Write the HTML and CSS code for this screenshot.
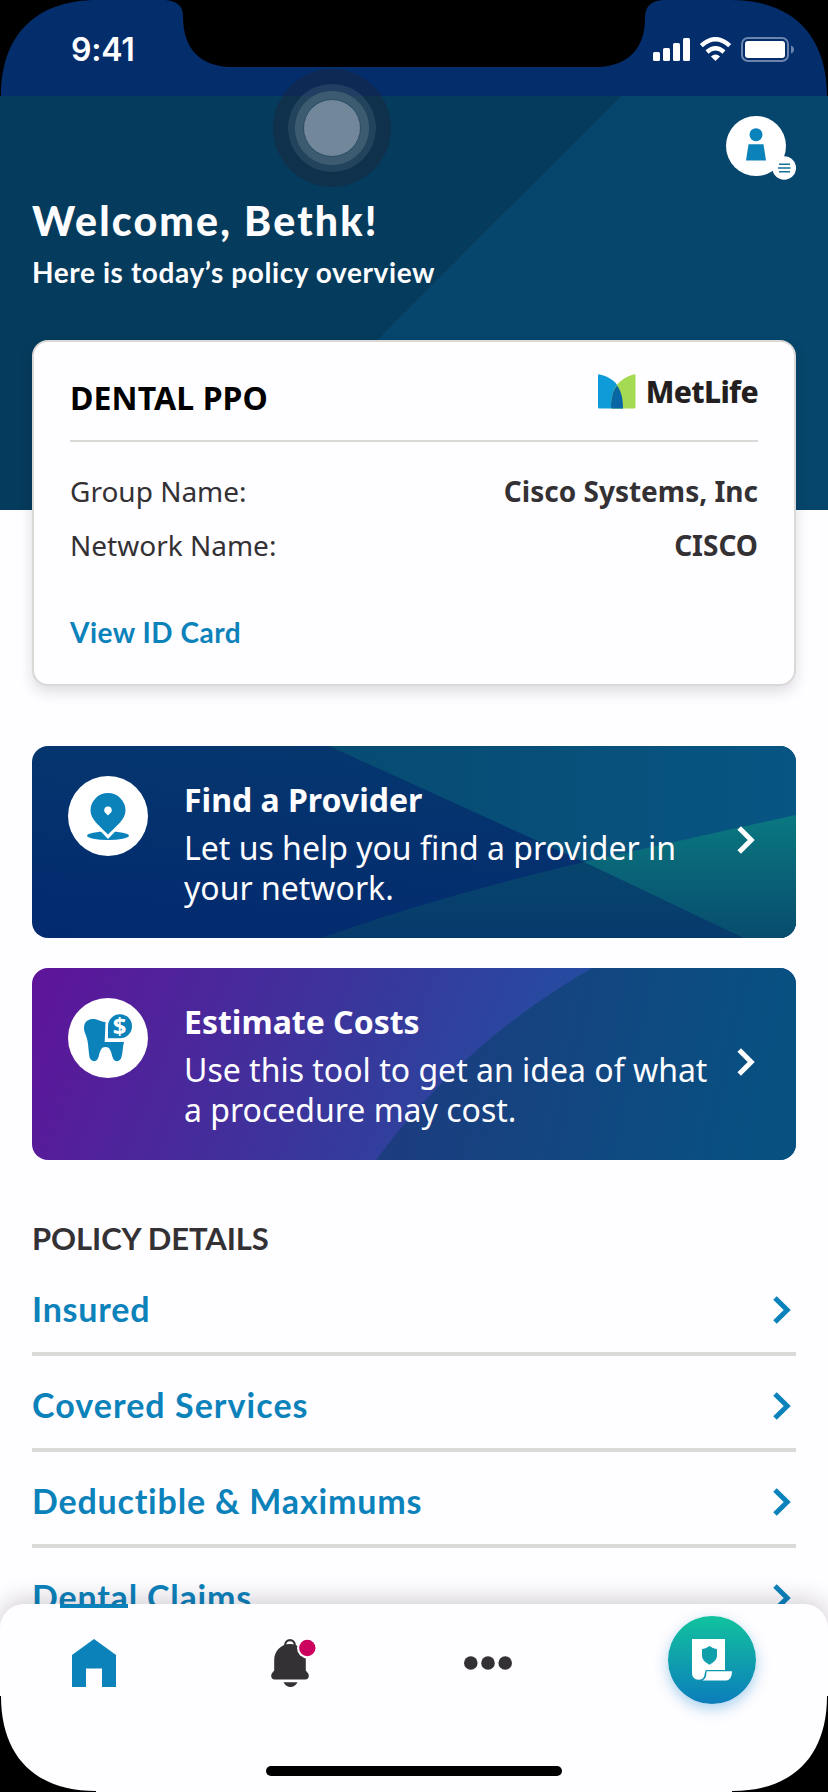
FILE: index.html
```html
<!DOCTYPE html>
<html lang="en">
<head>
<meta charset="utf-8">
<title>Policy overview</title>
<link rel="stylesheet" href="styles.css">
</head>
<body>
<div class="screen">
  <header class="status">
    <span class="time">9:41</span>
    <svg class="status-icons" width="142" height="26" viewBox="0 0 142 26">
      <g fill="#fff">
        <rect x="0" y="15" width="7" height="9" rx="1.5"/>
        <rect x="10" y="11" width="7" height="13" rx="1.5"/>
        <rect x="20" y="6" width="7" height="18" rx="1.5"/>
        <rect x="30" y="1" width="7" height="23" rx="1.5"/>
        <path d="M62.5 24l-4.600-4.600q4.600-3.600 9.200 0z"/>
      </g>
      <g fill="none" stroke="#fff" stroke-width="4.400">
        <path d="M48.300 8.700Q62.500-4.300 76.700 8.700"/>
        <path d="M54 15Q62.500 7.400 71 15"/>
      </g>
      <rect x="89" y="1" width="46" height="23" rx="6" fill="none" stroke="#6b84ae" stroke-width="2"/>
      <rect x="92" y="4" width="40" height="17" rx="3" fill="#fff"/>
      <path d="M138 8.500q3 1 3 4t-3 4z" fill="#6b84ae"/>
    </svg>
  </header>

  <section class="hero">
    <button class="avatar" aria-label="Profile">
      <svg width="72" height="66" viewBox="0 0 72 66">
        <circle cx="30" cy="30" r="30" fill="#fff"/>
        <circle cx="30" cy="18.700" r="6.500" fill="#0c82bb"/>
        <path d="M22.500 28.300h15L40 44.500H20z" fill="#0c82bb"/>
        <circle cx="58.200" cy="52" r="11.800" fill="#fff"/>
        <path d="M53 48.300h11M52 52h12.500M53 55.700h11" stroke="#146f96" stroke-width="1.400"/>
      </svg>
    </button>
    <h1 class="welcome">Welcome, Bethk!</h1>
    <p class="subtitle">Here is today’s policy overview</p>
  </section>

  <main class="content">
    <article class="card">
      <div class="card-head">
        <h2 class="plan">DENTAL PPO</h2>
        <div class="brand">
          <svg width="38" height="35" viewBox="0 0 38 35">
            <path d="M0 1.500Q0 .2 1.800.4C12 2.800 19 8 22 16c2 5.500 3 12 3 18.500H1.500Q0 34.500 0 33z" fill="#0f9bd8"/>
            <path d="M37.500 1.500Q37.500.2 35.700.4C26 2.800 18.500 9 15.500 17c-2 5-2.500 11-2.500 17.500h23q1.500 0 1.500-1.500z" fill="#a5db52"/>
            <path d="M19 11.500C14.500 17 13 25 13 33q0 1.500 1.500 1.500H25C25 25 23.500 17.500 19 11.500z" fill="#0866a5"/>
          </svg>
          <span class="brand-name">MetLife</span>
        </div>
      </div>
      <dl class="facts">
        <div class="fact"><dt>Group Name:</dt><dd>Cisco Systems, Inc</dd></div>
        <div class="fact"><dt>Network Name:</dt><dd>CISCO</dd></div>
      </dl>
      <a class="id-link">View ID Card</a>
    </article>

    <a class="banner provider">
      <svg class="art" viewBox="0 0 764 192">
        <defs>
          <linearGradient id="navy" x1="0" y1="1" x2=".3" y2="0"><stop offset="0" stop-color="#032a6f"/><stop offset="1" stop-color="#05366e"/></linearGradient>
          <linearGradient id="sea" x1="0" y1="0" x2="1" y2="0"><stop offset="0" stop-color="#074b71"/><stop offset="1" stop-color="#075583"/></linearGradient>
          <linearGradient id="teal" x1="0" y1="0" x2="0" y2="1"><stop offset="0" stop-color="#0a7880"/><stop offset="1" stop-color="#084c6e"/></linearGradient>
          <linearGradient id="deep" x1="0" y1="0" x2="0" y2="1"><stop offset="0" stop-color="#07456d"/><stop offset="1" stop-color="#063a6c"/></linearGradient>
        </defs>
        <path d="M0 0h764v192H0z" fill="url(#navy)"/>
        <path d="M297 0h467v192h-52L552 116z" fill="url(#sea)"/>
        <path d="M290 192Q400 152 552 116L712 192z" fill="url(#deep)"/>
        <path d="M552 116L764 69v123h-52z" fill="url(#teal)"/>
      </svg>
      <svg class="badge" width="80" height="80" viewBox="0 0 80 80">
        <circle cx="40" cy="40" r="40" fill="#fff"/>
        <ellipse cx="40" cy="59.700" rx="21" ry="4.200" fill="#0c82bb"/>
        <path d="M30.500 53L40 63l9.500-10z" fill="#fff"/>
        <path d="M40 58.500C33 51 22.500 44 22.500 34.500a17.500 17.500 0 0 1 35 0C57.500 44 47 51 40 58.500z" fill="#0c82bb"/>
        <path d="M40 39.500c-1-1.500-3.800-2.800-3.800-5.300a3.800 3.800 0 0 1 7.600 0c0 2.500-2.800 3.800-3.800 5.300z" fill="#fff"/>
      </svg>
      <span class="copy"><strong class="banner-title">Find a Provider</strong><span class="banner-text">Let us help you find a provider in<br>your network.</span></span>
      <svg class="go" width="22" height="30" viewBox="0 0 22 30"><path d="M3.200 3L15.200 15l-12 12" fill="none" stroke="#fff" stroke-width="5"/></svg>
    </a>

    <a class="banner costs">
      <svg class="art" viewBox="0 0 764 192">
        <defs>
          <linearGradient id="violet" x1="0" y1="0" x2="1" y2=".1"><stop offset="0" stop-color="#5f149a"/><stop offset=".5" stop-color="#353b9c"/><stop offset=".75" stop-color="#234ea1"/></linearGradient>
          <linearGradient id="blue" x1="0" y1="0" x2="1" y2=".1"><stop offset="0" stop-color="#1f3a80"/><stop offset="1" stop-color="#075181"/></linearGradient>
        </defs>
        <path d="M0 0h764v192H0z" fill="url(#violet)"/>
        <path d="M344 192Q430 75 560 0H764v192z" fill="url(#blue)"/>
      </svg>
      <svg class="badge" width="80" height="80" viewBox="0 0 80 80">
        <circle cx="40" cy="40" r="40" fill="#fff"/>
        <path d="M16 30c0-8 7-10 12.500-8.500 3 .8 5.500 2.500 9 2.500l-.8 20H56c-1.500 5-1 10-2.500 15-1 5-7.500 6-9 0-1.500-5-2-10-7-10s-5.500 5-7 10c-1.500 6-8 5-9 0C20 49 20.500 44 18 37.500 17 35 16 33 16 30z" fill="#0c82bb"/>
        <path d="M40 40.300V28.200a12 12 0 1 1 12 12.100z" fill="#0c82bb"/>
        <text class="dollar" x="51.500" y="36.700" text-anchor="middle">$</text>
      </svg>
      <span class="copy"><strong class="banner-title">Estimate Costs</strong><span class="banner-text">Use this tool to get an idea of what<br>a procedure may cost.</span></span>
      <svg class="go" width="22" height="30" viewBox="0 0 22 30"><path d="M3.200 3L15.200 15l-12 12" fill="none" stroke="#fff" stroke-width="5"/></svg>
    </a>

    <h3 class="section-title">POLICY DETAILS</h3>
    <nav class="details">
      <a class="row"><span class="label insured">Insured</span><svg class="chev" width="22" height="30" viewBox="0 0 22 30"><path d="M5 3L17.200 15 5 27"/></svg></a>
      <a class="row"><span class="label covered">Covered Services</span><svg class="chev" width="22" height="30" viewBox="0 0 22 30"><path d="M5 3L17.200 15 5 27"/></svg></a>
      <a class="row"><span class="label deductible">Deductible &amp; Maximums</span><svg class="chev" width="22" height="30" viewBox="0 0 22 30"><path d="M5 3L17.200 15 5 27"/></svg></a>
      <a class="row"><span class="label claims">Dental Claims</span><svg class="chev" width="22" height="30" viewBox="0 0 22 30"><path d="M5 3L17.200 15 5 27"/></svg></a>
    </nav>
  </main>

  <footer class="tabs">
    <a class="tab active" aria-label="Home">
      <svg width="44" height="48" viewBox="0 0 44 48"><path d="M22 0L44 16v32H30V29.500H14V48H0V16z" fill="#0c82bb"/></svg>
    </a>
    <a class="tab" aria-label="Notifications">
      <svg width="46" height="48" viewBox="0 0 46 48">
        <circle cx="19" cy="6" r="4.800" fill="none" stroke="#343135" stroke-width="2.200"/>
        <path d="M19 5C10 5 3.200 12 3.200 21v10.500L.8 34.500C-.8 38 1 40.500 3.500 40.500h31c2.500 0 4.300-2.500 2.700-6l-2.400-3V21C34.800 12 28 5 19 5zM12.500 43.300h14c-1.500 3-4 4.700-7 4.700s-5.500-1.700-7-4.700z" fill="#343135"/>
        <circle cx="36.300" cy="9" r="10.300" fill="#fff"/>
        <circle cx="36.300" cy="9" r="8.200" fill="#cc005f"/>
      </svg>
    </a>
    <a class="tab" aria-label="More">
      <svg width="48" height="14" viewBox="0 0 48 14" fill="#343135"><circle cx="6.800" cy="7" r="6.800"/><circle cx="24" cy="7" r="6.800"/><circle cx="41.200" cy="7" r="6.800"/></svg>
    </a>
    <a class="fab" aria-label="ID card">
      <svg width="40" height="42" viewBox="0 0 40 42">
        <path d="M0 0h33v31H14c-2.500 3 .5 9.500-7.500 9.800C2.500 40.500 0 38 0 34z" fill="#fff"/>
        <path d="M14.500 32.300H40c0 5-2 9.200-6 9.200H10.500c3-1.500 4-4 4-9.200z" fill="#fff"/>
        <path d="M17.500 7q3.500 2.700 7.500 3.200v6.300c0 4-3 6.800-7.500 9.200-4.500-2.400-7.500-5.200-7.500-9.200v-6.300Q14 9.700 17.500 7z" fill="#10a0ac"/>
      </svg>
    </a>
    <span class="home-bar"></span>
  </footer>

  <span class="touch"><span class="touch-ring"><span class="touch-core"></span></span></span>
  <svg class="bezel" width="828" height="1792" viewBox="0 0 828 1792">
    <path d="M0 0H97C38 0 1 33 1 96H0zM828 0H731C790 0 827 33 827 96h1zM0 1696H1C1 1759 38 1791 96 1791v1H0zM828 1696h-1C827 1759 790 1791 732 1791v1h96z"/>
    <path d="M165 0C177 1 183 6 183 16C183 48 199 65 228 67H600C629 65 645 48 645 18C645 6 651 1 663 0z"/>
  </svg>
</div>
</body>
</html>
```
FILE: styles.css
```css
* { box-sizing: border-box; margin: 0; padding: 0; }

body { background: #fefdff; font-family: "Noto Sans", sans-serif; }

.screen {
  position: relative;
  width: 828px;
  height: 1792px;
  overflow: hidden;
  background: #fefdff;
}

/* Status bar */
.status {
  display: flex;
  justify-content: space-between;
  height: 96px;
  padding: 30px 33px 0 71px;
  background: #042d6b;
}
.time { color: #fff; font: 600 32px/40px Inter, sans-serif; letter-spacing: -0.2px; }
.status-icons { margin-top: 7px; }

/* Hero */
.hero {
  display: flex;
  flex-direction: column;
  height: 414px;
  padding: 20px 30px 0 32px;
  color: #fefdff;
  background: linear-gradient(-45deg, #06466c 50%, #053b5c 50%) 207px 0 / 414px 414px no-repeat,
    linear-gradient(90deg, #053b5c 414px, #06466c 414px);
}
.avatar { align-self: flex-end; width: 72px; height: 66px; border: 0; background: none; }
.avatar svg { display: block; }
.welcome { margin-top: 15px; font: 900 41px/48px Lato, sans-serif; letter-spacing: 2.2px; }
.subtitle { margin-top: 7px; font: 700 28px/40px Lato, sans-serif; letter-spacing: 0.6px; }

.content { margin-top: -170px; padding: 0 32px; }

/* Policy card */
.card {
  height: 346px;
  padding: 0 36px;
  border: 2px solid #dad9d7;
  border-radius: 16px;
  background: #fefdff;
  box-shadow: 0 6px 14px rgba(30, 20, 40, 0.14);
}
.card-head {
  display: flex;
  justify-content: space-between;
  height: 100px;
  border-bottom: 2px solid #dad9d7;
}
.plan { margin-top: 34px; font-size: 32px; line-height: 44px; color: #000; letter-spacing: 0.1px; }
.brand { display: flex; gap: 10px; margin-top: 32px; height: 36px; }
.brand-name { font-weight: 800; font-size: 30px; line-height: 36px; color: #231f20; letter-spacing: -0.65px; }
.facts { padding-top: 22px; }
.fact {
  display: flex;
  justify-content: space-between;
  font-size: 28px;
  line-height: 54px;
  color: #343135;
}
.fact dd { font-weight: 700; }
.id-link { display: block; margin-top: 40px; color: #0c82bb; font: 700 28px/40px Lato, sans-serif; letter-spacing: 0.5px; }

/* Banners */
.banner {
  display: flex;
  position: relative;
  height: 192px;
  margin-top: 60px;
  padding: 30px 38px 0 36px;
  border-radius: 16px;
  overflow: hidden;
  color: #fefdff;
}
.banner + .banner { margin-top: 30px; }
.art { position: absolute; inset: 0; width: 100%; height: 100%; }
.badge { position: relative; flex: none; }
.copy {
  position: relative;
  flex: 1;
  display: flex;
  flex-direction: column;
  gap: 8px;
  margin: 4px 0 0 36px;
  font-size: 32px;
  line-height: 40px;
  white-space: nowrap;
}
.banner-title { font-weight: 700; }
.go { position: relative; flex: none; margin-top: 49px; }
.dollar { font: 700 24px "Noto Sans", sans-serif; fill: #fff; }

/* Detail list */
.section-title { margin-top: 58px; color: #343135; font: 700 31px/40px Lato, sans-serif; letter-spacing: -0.1px; }
.details { padding-top: 2px; }
.row {
  display: flex;
  align-items: center;
  justify-content: space-between;
  height: 96px;
  padding: 8px 4px 0 0;
  border-bottom: 4px solid #dad9d7;
}
.label { padding-bottom: 2px; color: #0c82bb; font: 700 34px/40px Lato, sans-serif; letter-spacing: 0.8px; }
.covered { letter-spacing: 1.05px; }
.chev { fill: none; stroke: #0c82bb; stroke-width: 5px; }

/* Tab bar */
.tabs {
  position: absolute;
  left: 0;
  right: 0;
  bottom: 0;
  height: 188px;
  display: flex;
  align-items: flex-start;
  border-radius: 24px 24px 0 0;
  background: #fefdff;
  box-shadow: 0 -4px 24px rgba(30, 20, 40, 0.2);
}
.tab { display: flex; justify-content: center; align-items: center; height: 118px; width: 68px; }
.tab:first-child { margin-left: 60px; border-top: 4px solid #0c82bb; }
.tab:first-child svg { margin-top: -4px; }
.tab:nth-child(2) { margin-left: 132px; }
.tab:nth-child(3) { margin-left: 126px; }
.fab {
  display: flex;
  align-items: center;
  justify-content: center;
  width: 88px;
  height: 88px;
  margin: 12px 0 0 146px;
  border-radius: 50%;
  background: linear-gradient(#12c29e, #0c7dbb);
  box-shadow: 0 5px 14px rgba(12, 130, 200, 0.35);
}
.home-bar {
  position: absolute;
  left: 266px;
  bottom: 16px;
  width: 296px;
  height: 10px;
  border-radius: 5px;
  background: #000;
}

/* Floating assistive control over the header */
.touch, .touch-ring, .touch-core { display: flex; align-items: center; justify-content: center; border-radius: 50%; }
.touch { position: absolute; left: 273px; top: 69px; width: 118px; height: 118px; background: rgba(32, 36, 56, 0.42); }
.touch-ring { width: 88px; height: 88px; background: radial-gradient(circle, #3c5b71 0 36.5px, rgba(80, 110, 130, 0.3) 37.5px); }
.touch-core { width: 58px; height: 58px; background: #728799; border: 1px solid #2b4d66; }

.bezel { position: absolute; inset: 0; pointer-events: none; }
```
